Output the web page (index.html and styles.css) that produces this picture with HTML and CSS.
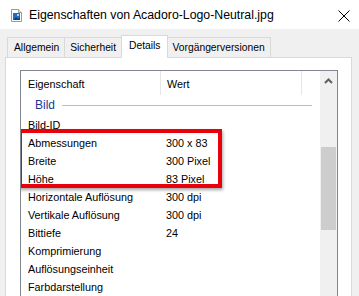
FILE: index.html
```html
<!DOCTYPE html>
<html lang="de">
    <head>
        <meta charset="utf-8">
        <title>Eigenschaften</title>
        <link rel="stylesheet" href="styles.css">
    </head>
    <body>
        <div class="titlebar">
            <svg class="fileIcon" width="11" height="13" viewBox="0 0 11 13">
                <path d="M0.5 0.5h7l3 3v9h-10z" fill="#fff" stroke="#9a9a9a"/>
                <path d="M7.5 0.5v3h3" fill="#e8e8e8" stroke="#9a9a9a"/>
                <rect x="2" y="4" width="7" height="7" fill="#1d6fc4"/>
                <path d="M2 11l3-3 2 2 2-2v3z" fill="#0b3f7c"/>
                <rect x="6" y="5" width="2" height="2" fill="#9fd3ff"/>
            </svg>
            <span class="titleText">Eigenschaften von Acadoro-Logo-Neutral.jpg</span>
            <svg class="closeIcon" width="12" height="12" viewBox="0 0 12 12">
                <path d="M0.5 0.5l11 11M11.5 0.5l-11 11" stroke="#000" stroke-width="1"/>
            </svg>
        </div>
        <div class="windowBody">
            <div class="tabs">
                <div class="tab">Allgemein</div>
                <div class="tab">Sicherheit</div>
                <div class="tab selected">Details</div>
                <div class="tab">Vorgängerversionen</div>
            </div>
            <div class="panel">
                <div class="listBox">
                    <div class="listMain">
                        <div class="header">
                            <div class="colName">Eigenschaft</div>
                            <div class="colValue">Wert</div>
                            <div class="colRest"></div>
                        </div>
                        <div class="group">
                            <span class="groupName">Bild</span>
                            <span class="groupLine"></span>
                        </div>
                        <div class="row"><span class="colName">Bild-ID</span><span class="colValue"></span></div>
                        <div class="row"><span class="colName">Abmessungen</span><span class="colValue">300 x 83</span></div>
                        <div class="row"><span class="colName">Breite</span><span class="colValue">300 Pixel</span></div>
                        <div class="row"><span class="colName">Höhe</span><span class="colValue">83 Pixel</span></div>
                        <div class="row"><span class="colName">Horizontale Auflösung</span><span class="colValue">300 dpi</span></div>
                        <div class="row"><span class="colName">Vertikale Auflösung</span><span class="colValue">300 dpi</span></div>
                        <div class="row"><span class="colName">Bittiefe</span><span class="colValue">24</span></div>
                        <div class="row"><span class="colName">Komprimierung</span><span class="colValue"></span></div>
                        <div class="row"><span class="colName">Auflösungseinheit</span><span class="colValue"></span></div>
                        <div class="row"><span class="colName">Farbdarstellung</span><span class="colValue"></span></div>
                        <div class="highlight"></div>
                    </div>
                    <div class="scrollbar">
                        <div class="scrollArrow">
                            <svg width="9" height="6" viewBox="0 0 9 6">
                                <path d="M1 5l3.5-3.5L8 5" fill="none" stroke="#606060" stroke-width="2"/>
                            </svg>
                        </div>
                        <div class="scrollThumb"></div>
                    </div>
                </div>
            </div>
        </div>
    </body>
</html>
```
FILE: styles.css
```css
body {
    margin: 0;
    width: 359px;
    height: 296px;
    overflow: hidden;
    background: #f0f0f0;
    font-family: "Liberation Sans", Arial, sans-serif;
    font-size: 10.8px;
    color: #000;
}
.titlebar {
    height: 29px;
    background: #fff;
    display: flex;
    align-items: center;
    padding-left: 11px;
}
.fileIcon {
    margin-top: 1px;
}
.titleText {
    font-size: 12.3px;
    margin-left: 7px;
    flex: 1;
}
.closeIcon {
    margin-right: 9px;
    margin-top: 2px;
}
.windowBody {
    padding: 0 7px 0 5px;
}
.tabs {
    display: flex;
    margin-top: 8px;
    margin-left: 2px;
    height: 20px;
    position: relative;
    z-index: 1;
    font-size: 10.3px;
}
.tab {
    height: 19px;
    line-height: 19px;
    padding: 0 5px;
    border: 1px solid #d9d9d9;
    border-bottom: none;
    margin-right: -1px;
    background: #f0f0f0;
}
.tab:first-child {
    padding: 0 5px 0 6px;
}
.tab.selected {
    background: #fff;
    height: 22px;
    margin-top: -2px;
    line-height: 20px;
    padding: 0 6px 0 7px;
    z-index: 2;
}
.panel {
    background: #fff;
    border: 1px solid #d9d9d9;
    border-bottom: none;
    height: 226px;
    padding: 12px 13px 0 14px;
}
.listBox {
    display: flex;
    border: 1px solid #828790;
    border-bottom: none;
    height: 226px;
}
.listMain {
    flex: 1;
    position: relative;
    overflow: hidden;
}
.header {
    display: flex;
    height: 24px;
    align-items: center;
}
.colName {
    width: 132px;
    padding-left: 7px;
    flex-shrink: 0;
}
.header .colName,
.header .colValue {
    height: 24px;
    line-height: 26px;
    border-right: 1px solid #e5e5e5;
}
.colValue {
    width: 134px;
    padding-left: 6px;
    flex-shrink: 0;
}
.header .colRest {
    flex: 1;
}
.group {
    display: flex;
    align-items: center;
    height: 21px;
    padding-left: 14px;
    padding-bottom: 2px;
    box-sizing: border-box;
}
.groupName {
    color: #1e3796;
    font-size: 12px;
}
.groupLine {
    width: 250px;
    height: 1px;
    background: #a8bde6;
    margin-left: 7px;
    margin-top: 1px;
}
.row {
    display: flex;
    height: 18px;
    line-height: 18px;
}
.row .colName {
    padding-left: 7px;
}
.highlight {
    position: absolute;
    left: -3px;
    top: 58px;
    width: 196px;
    height: 51px;
    border: 4px solid #e8000b;
    box-shadow: 1px 2px 3px rgba(0, 0, 0, 0.35);
}
.scrollbar {
    width: 17px;
    background: #f0f0f0;
    display: flex;
    flex-direction: column;
    align-items: center;
}
.scrollArrow {
    height: 17px;
    display: flex;
    align-items: center;
    justify-content: center;
    margin-top: 1px;
}
.scrollThumb {
    width: 15px;
    height: 83px;
    background: #cdcdcd;
    margin-top: 58px;
}
```
